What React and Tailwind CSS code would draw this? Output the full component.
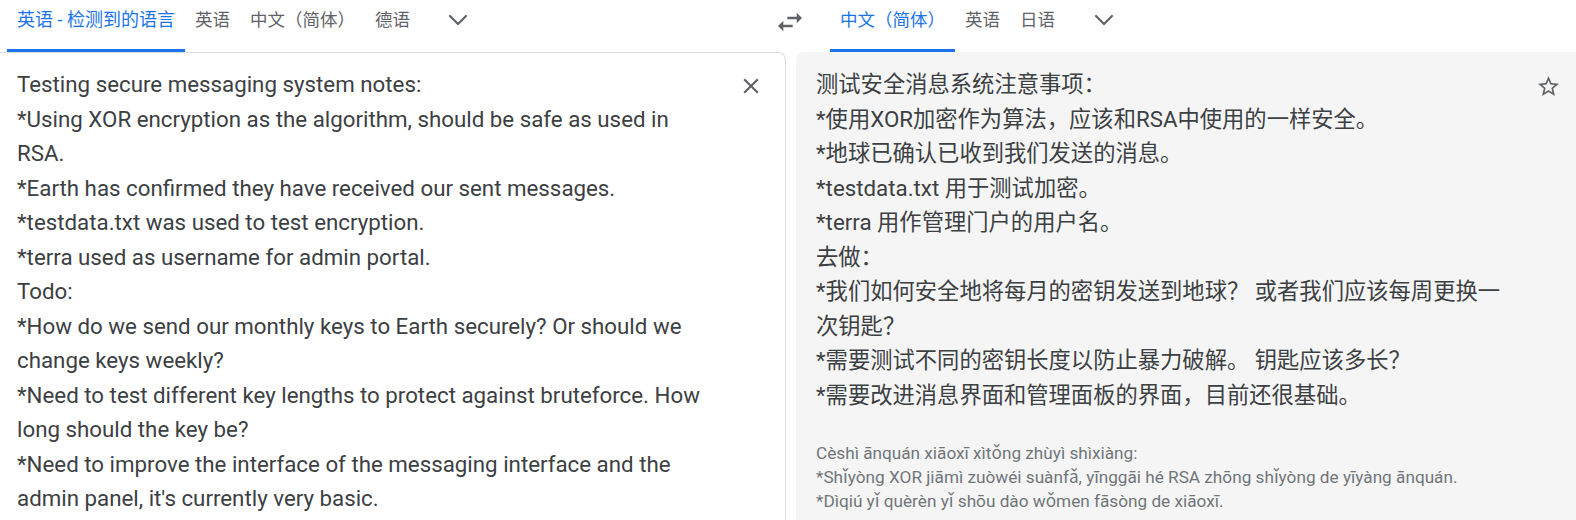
import React from "react";

const Chevron = () => (
  <svg width="20" height="12" viewBox="0 0 20 12" fill="none">
    <polyline points="2,2 10,10 18,2" stroke="#5f6368" strokeWidth="2.2" strokeLinecap="round" strokeLinejoin="round" />
  </svg>
);

const Swap = () => (
  <svg width="32" height="32" viewBox="0 0 24 24" fill="#5f6368">
    <path d="M6.99 11L3 15l3.99 4v-3H14v-2H6.99v-3zM21 9l-3.99-4v3H10v2h7.01v3L21 9z" />
  </svg>
);

const Close = () => (
  <svg width="26" height="26" viewBox="0 0 24 24" fill="#5f6368">
    <path d="M19 6.41L17.59 5 12 10.59 6.41 5 5 6.41 10.59 12 5 17.59 6.41 19 12 13.41 17.59 19 19 17.59 13.41 12z" />
  </svg>
);

const Star = () => (
  <svg width="25" height="25" viewBox="0 0 24 24" fill="#5f6368">
    <path d="M22 9.24l-7.19-.62L12 2 9.19 8.63 2 9.24l5.46 4.73L5.82 21 12 17.27 18.18 21l-1.63-7.03L22 9.24zM12 15.4l-3.76 2.27 1-4.28-3.32-2.88 4.38-.38L12 6.1l1.71 4.04 4.38.38-3.32 2.88 1 4.28L12 15.4z" />
  </svg>
);

const Tab = ({ children, active, big }) => (
  <div
    className={
      "flex flex-col h-[52px] px-[10px] " +
      (big ? "text-[18px] " : "text-[17.5px] ") +
      (active ? "border-b-[3px] border-[#1a73e8] text-[#1a73e8]" : "text-[#5f6368]")
    }
  >
    <div className="pt-[8px] leading-[24px] whitespace-nowrap">{children}</div>
  </div>
);

const leftLines = [
  "Testing secure messaging system notes:",
  "*Using XOR encryption as the algorithm, should be safe as used in RSA.",
  "*Earth has confirmed they have received our sent messages.",
  "*testdata.txt was used to test encryption.",
  "*terra used as username for admin portal.",
  "Todo:",
  "*How do we send our monthly keys to Earth securely? Or should we change keys weekly?",
  "*Need to test different key lengths to protect against bruteforce. How long should the key be?",
  "*Need to improve the interface of the messaging interface and the admin panel, it's currently very basic.",
];

const rightLines = [
  "测试安全消息系统注意事项：",
  "*使用XOR加密作为算法，应该和RSA中使用的一样安全。",
  "*地球已确认已收到我们发送的消息。",
  "*testdata.txt 用于测试加密。",
  "*terra 用作管理门户的用户名。",
  "去做：",
  "*我们如何安全地将每月的密钥发送到地球？ 或者我们应该每周更换一次钥匙？",
  "*需要测试不同的密钥长度以防止暴力破解。 钥匙应该多长？",
  "*需要改进消息界面和管理面板的界面，目前还很基础。",
];

const pinyin = [
  "Cèshì ānquán xiāoxī xìtǒng zhùyì shìxiàng:",
  "*Shǐyòng XOR jiāmì zuòwéi suànfǎ, yīnggāi hé RSA zhōng shǐyòng de yīyàng ānquán.",
  "*Dìqiú yǐ quèrèn yǐ shōu dào wǒmen fāsòng de xiāoxī.",
];

export default function App() {
  return (
    <div
      className="w-[1576px] h-[520px] overflow-hidden bg-white text-[#3c4043]"
      style={{ fontFamily: "Roboto, 'Noto Sans CJK SC', sans-serif" }}
    >
      <div className="flex h-[52px]">
        <div className="w-[774px] flex pl-[7px]">
          <Tab active big>英语 - 检测到的语言</Tab>
          <Tab>英语</Tab>
          <Tab>中文（简体）</Tab>
          <Tab>德语</Tab>
          <div className="ml-[14px] w-[48px] h-[40px] flex items-center justify-center">
            <Chevron />
          </div>
        </div>
        <div className="w-[32px] h-[42px] flex items-center justify-center pt-[2px]">
          <Swap />
        </div>
        <div className="flex pl-[24px]">
          <Tab active>中文（简体）</Tab>
          <Tab>英语</Tab>
          <Tab>日语</Tab>
          <div className="ml-[15px] w-[48px] h-[40px] flex items-center justify-center">
            <Chevron />
          </div>
        </div>
      </div>
      <div className="flex h-[468px]">
        <div className="w-[786px] border-t border-r border-[#dadce0] rounded-tr-[8px] flex pl-[17px] pt-[14px]">
          <div className="w-[695px] text-[22.3px] leading-[34.5px]">
            {leftLines.map((l, i) => (
              <div key={i}>{l}</div>
            ))}
          </div>
          <div className="ml-[26px] mt-[6px] h-[26px]">
            <Close />
          </div>
        </div>
        <div className="ml-[10px] flex-1 bg-[#f5f5f5] rounded-tl-[8px] flex pl-[20px] pt-[15px]">
          <div className="w-[696px]">
            <div className="text-[22.3px] leading-[34.5px]">
              {rightLines.map((l, i) => (
                <div key={i}>{l}</div>
              ))}
            </div>
            <div className="mt-[29px] text-[17.2px] leading-[24px] text-[#70757a]">
              {pinyin.map((l, i) => (
                <div key={i}>{l}</div>
              ))}
            </div>
          </div>
          <div className="ml-auto mr-[15px] mt-[7px] h-[25px]">
            <Star />
          </div>
        </div>
      </div>
    </div>
  );
}
